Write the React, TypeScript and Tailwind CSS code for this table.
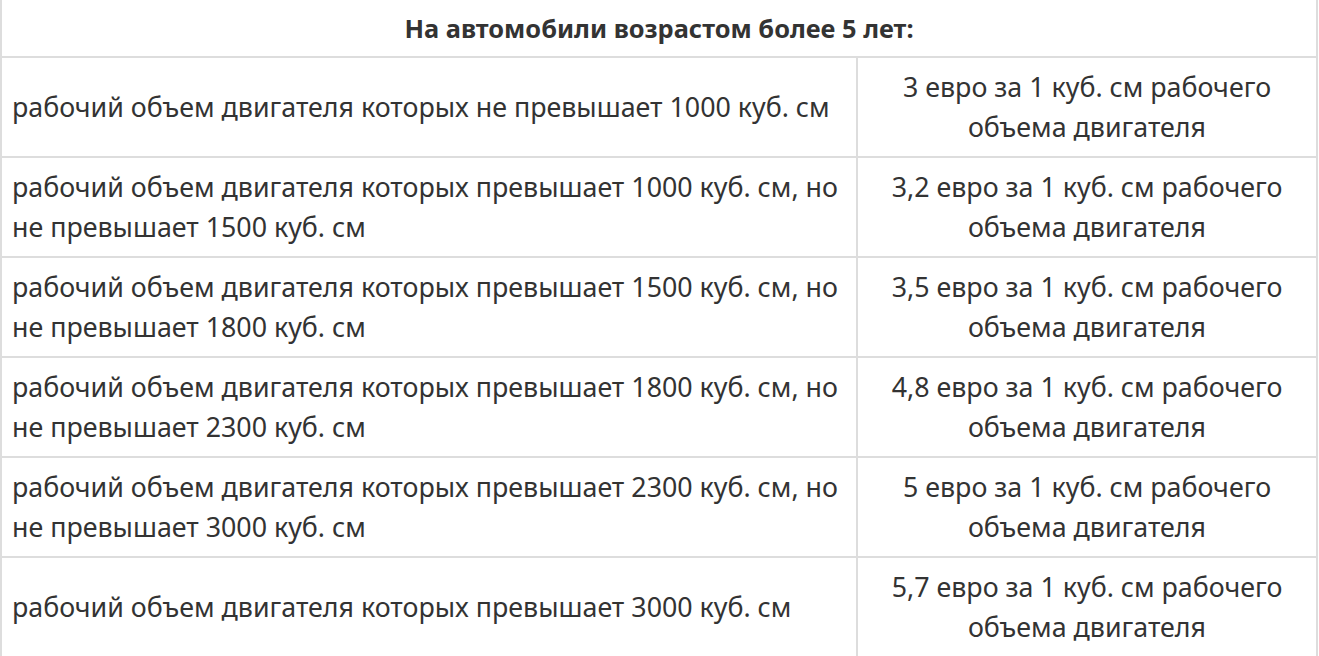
import React from "react";

const rows: [string, string][] = [
  ["рабочий объем двигателя которых не превышает 1000 куб. см", "3 евро за 1 куб. см рабочего объема двигателя"],
  ["рабочий объем двигателя которых превышает 1000 куб. см, но не превышает 1500 куб. см", "3,2 евро за 1 куб. см рабочего объема двигателя"],
  ["рабочий объем двигателя которых превышает 1500 куб. см, но не превышает 1800 куб. см", "3,5 евро за 1 куб. см рабочего объема двигателя"],
  ["рабочий объем двигателя которых превышает 1800 куб. см, но не превышает 2300 куб. см", "4,8 евро за 1 куб. см рабочего объема двигателя"],
  ["рабочий объем двигателя которых превышает 2300 куб. см, но не превышает 3000 куб. см", "5 евро за 1 куб. см рабочего объема двигателя"],
  ["рабочий объем двигателя которых превышает 3000 куб. см", "5,7 евро за 1 куб. см рабочего объема двигателя"],
];

export default function App() {
  return (
    <div className="w-[1319px] h-[656px] overflow-hidden bg-white">
      <div
        className="w-[1318px] border-x-2 border-[#dddddd] text-[#333333] text-[26.8px] leading-[40px]"
        style={{ fontFamily: '"Noto Sans", "Open Sans", sans-serif' }}
      >
        <div className="h-[58px] border-b-2 border-[#dddddd] flex items-center justify-center font-bold text-[25.4px]">
          На автомобили возрастом более 5 лет:
        </div>
        {rows.map(([l, r], i) => (
          <div key={i} className="grid grid-cols-[856px_1fr] h-[100px] border-b-2 border-[#dddddd]">
            <div className="border-r-2 border-[#dddddd] px-[10px] flex items-center">
              <span>{l}</span>
            </div>
            <div className="flex items-center justify-center text-center px-[10px]">
              <span>{r}</span>
            </div>
          </div>
        ))}
      </div>
    </div>
  );
}
